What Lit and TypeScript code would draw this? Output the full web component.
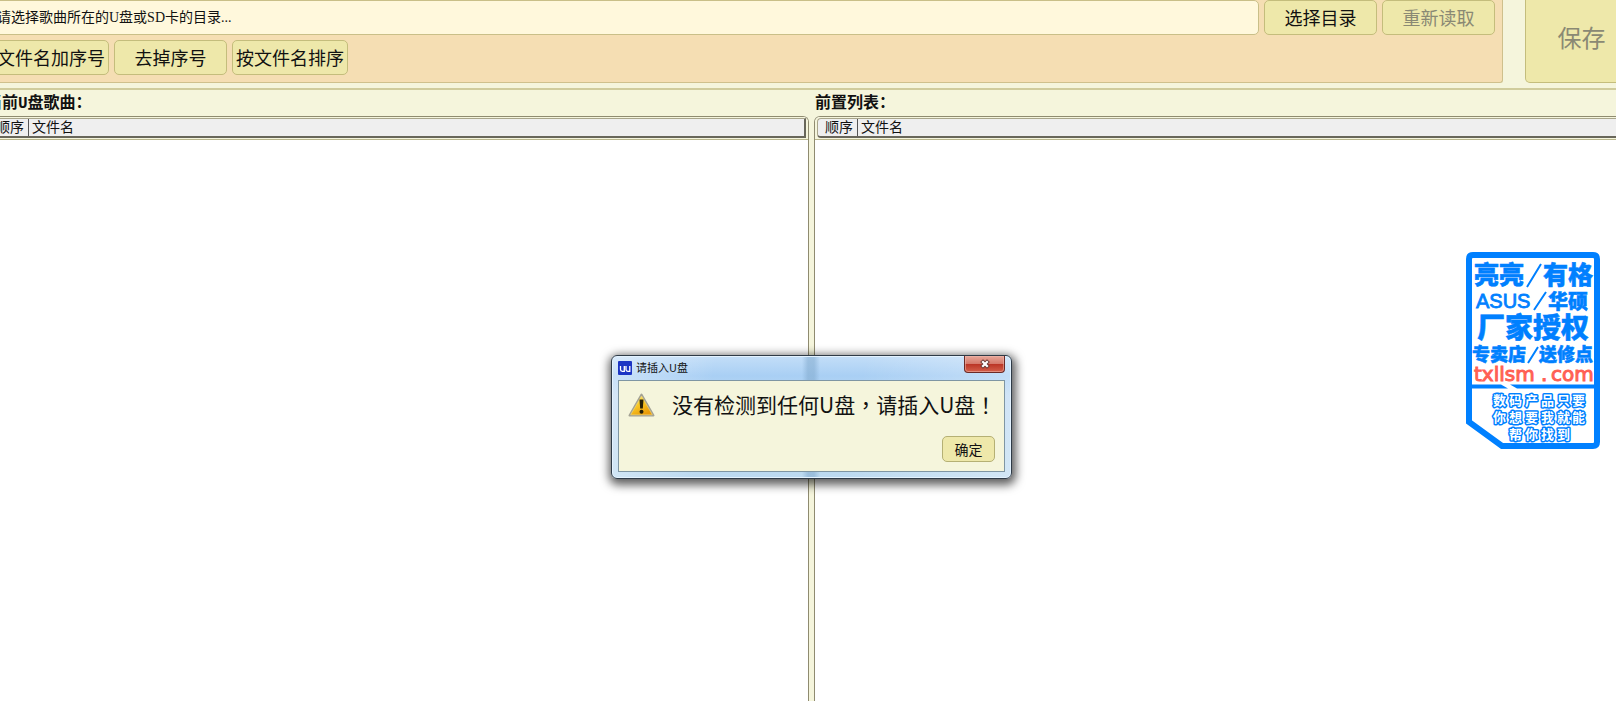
import { LitElement, html, css, svg } from "lit";
import { customElement, property, state } from "lit/decorators.js";

@customElement("song-list")
class SongList extends LitElement {
  @property() heading = "";

  static styles = css`
    :host {
      display: flex;
      flex-direction: column;
      min-width: 0;
      color: #111;
      font-family: "Liberation Mono", "Noto Sans CJK SC", monospace;
    }
    .heading {
      margin: 0;
      padding: 3px 1px 0;
      font-size: 16px;
      line-height: 23px;
      font-weight: 700;
    }
    .frame {
      flex: 1;
      box-sizing: border-box;
      border: 1px solid #8f8b70;
      border-bottom: 0;
      border-radius: 6px 6px 0 0;
      background: #fff;
      overflow: hidden;
    }
    .head-box {
      padding: 1px 2px;
      background: #f5f5dc;
      border-bottom: 1px solid #b9b68c;
    }
    table {
      width: 100%;
      box-sizing: border-box;
      table-layout: fixed;
      border-collapse: separate;
      border-spacing: 0;
      border: 1px solid #a9a68c;
      border-right: 2px solid #68665a;
      border-bottom: 2px solid #68665a;
      border-radius: 4px 0 0 4px;
      background: #efefef;
    }
    th {
      padding: 2px 0 0 3px;
      font-size: 14px;
      line-height: 15px;
      font-weight: 400;
      text-align: left;
    }
    .order {
      width: 32px;
      padding-left: 7px;
      border-right: 1px solid #555;
    }
  `;

  render() {
    return html`
      <h2 class="heading" id="heading">${this.heading}</h2>
      <div class="frame">
        <div class="head-box">
          <table aria-labelledby="heading">
            <thead>
              <tr>
                <th class="order" scope="col">顺序</th>
                <th scope="col">文件名</th>
              </tr>
            </thead>
          </table>
        </div>
      </div>
    `;
  }
}

@customElement("message-dialog")
class MessageDialog extends LitElement {
  static styles = css`
    :host {
      display: block;
      box-sizing: border-box;
      width: 401px;
      padding: 0 6px 6px;
      border: 1px solid #2f3b47;
      border-radius: 6px;
      background:
        linear-gradient(90deg, #ffffff00 190px, #7fa8cc88 196px, #7fa8cc88 202px, #ffffff00 208px),
        linear-gradient(100deg, #ffffff66 0, #ffffff00 25%, #ffffff00 60%, #ffffff55 100%),
        linear-gradient(#c3def8 0, #a9cff4 20px, #bdd9f3 40px, #bcdaf0 100%);
      box-shadow: inset 0 0 0 1px #e4f3ff, 1px 3px 10px 3px #000000a0;
      font-family: "Noto Sans CJK SC", sans-serif;
      color: #111;
    }
    .title-bar {
      display: flex;
      align-items: flex-start;
      height: 24px;
    }
    .app-icon {
      width: 14px;
      height: 14px;
      margin-top: 5px;
    }
    .title {
      flex: 1;
      margin: 3px 0 0 4px;
      font-size: 11px;
      line-height: 16px;
      font-weight: 400;
    }
    .close {
      display: flex;
      justify-content: center;
      align-items: center;
      width: 41px;
      height: 17px;
      padding: 0;
      border: 1px solid #6b2a26;
      border-top: 0;
      border-radius: 0 0 4px 4px;
      background: linear-gradient(#e7a799 0, #d5796b 48%, #bb3526 52%, #d4604b 100%);
      box-shadow: inset 0 0 0 1px #f0b9ae88;
    }
    .close svg {
      width: 12px;
      height: 10px;
    }
    .body {
      display: flex;
      flex-direction: column;
      gap: 16px;
      padding: 8px 9px 9px;
      border: 1px solid #7f96a3;
      background: #f5f5dc;
    }
    .message {
      display: flex;
      align-items: center;
      gap: 17px;
      margin: 0;
      font-size: 21px;
      line-height: 31px;
      white-space: nowrap;
    }
    .mark {
      font-family: "Noto Sans CJK TC", sans-serif;
    }
    .warn {
      width: 27px;
      height: 24px;
      flex: none;
    }
    .ok {
      align-self: flex-end;
      width: 53px;
      height: 26px;
      padding: 0;
      border: 1px solid #b5b074;
      border-radius: 5px;
      background: #eee8aa;
      color: #111;
      font: 14px/20px "Noto Sans CJK SC", sans-serif;
    }
  `;

  private dismiss() {
    this.dispatchEvent(new CustomEvent("dismiss"));
  }

  render() {
    return html`
      <div class="title-bar">
        <svg class="app-icon" viewBox="0 0 14 14" aria-hidden="true">
          <rect width="14" height="14" rx="1" fill="#1c35c4" />
          <path d="M2.500 5v3.500q0 1.800 1.800 1.800h2V5M8 5v3.500q0 1.800 1.800 1.800h2V5" fill="none" stroke="#fff" stroke-width="1.300" />
        </svg>
        <h1 class="title">请插入U盘</h1>
        <button class="close" aria-label="关闭" @click=${this.dismiss}>
          <svg viewBox="0 0 12 10" aria-hidden="true">
            <path d="M4 3l4 4M8 3l-4 4" stroke="#6a3833" stroke-width="4" stroke-linecap="square" />
            <path d="M4 3l4 4M8 3l-4 4" stroke="#fff" stroke-width="2.200" stroke-linecap="square" />
          </svg>
        </button>
      </div>
      <div class="body">
        <p class="message">
          <svg class="warn" viewBox="0 0 27 24" aria-hidden="true">
            <defs>
              <linearGradient id="amber" x1="0" y1="0" x2="0.6" y2="1">
                <stop offset="0" stop-color="#fff08a" />
                <stop offset="0.5" stop-color="#f8c928" />
                <stop offset="1" stop-color="#e99a08" />
              </linearGradient>
            </defs>
            <path d="M13.500 1.500L25.500 22.500H1.500z" fill="url(#amber)" stroke="#a3a294" stroke-width="2" stroke-linejoin="round" />
            <path d="M13.500 3L24.300 21.800H2.700z" fill="url(#amber)" stroke="#f3d878" stroke-width="0.600" />
            <path d="M11.500 6.500h4l-0.700 9h-2.600z" fill="#252008" />
            <circle cx="13.500" cy="18.700" r="2" fill="#252008" />
          </svg>
          <span>没有检测到任何U盘<span class="mark">，</span>请插入U盘<span class="mark">！</span></span>
        </p>
        <button class="ok" @click=${this.dismiss}>确定</button>
      </div>
    `;
  }
}

const stamp = svg`
  <path d="M7 3H127Q131 3 131 7V190Q131 194 127 194H36L3 170V7Q3 3 7 3Z" fill="#fff" stroke="#0080ff" stroke-width="6" />
  <path d="M3 132.500H35L42 136.500H3Z" fill="#0080ff" />
  <path d="M44 132.500H131V136.500H51Z" fill="#0080ff" />
  <g class="heavy">
    <text x="8" y="32" font-size="25">亮亮</text>
    <text x="77" y="32" font-size="25">有格</text>
    <text x="82" y="57" font-size="20">华硕</text>
    <text x="11" y="86" font-size="28">厂家授权</text>
    <text x="6" y="109" font-size="18">专卖店</text>
    <text x="73" y="109" font-size="18">送修点</text>
  </g>
  <text class="latin" x="10" y="56" font-size="20">ASUS</text>
  <path d="M61 35L75 12M68 58L80 40M62 111L72 95" stroke="#0080ff" stroke-width="2" />
  <g class="site" font-size="20">
    <text x="8" y="129">txllsm</text>
    <text x="75" y="129">.</text>
    <text x="85" y="129">com</text>
  </g>
  <g class="slogan" font-size="13">
    <text x="27 43 59 75 91 106" y="153">数码产品只要</text>
    <text x="27 43 59 75 91 106" y="170">你想要我就能</text>
    <text x="43 59 75 91" y="187">帮你找到</text>
  </g>
`;

@customElement("app-root")
class AppRoot extends LitElement {
  @state() private dialogOpen = true;

  static styles = css`
    :host {
      display: block;
      position: relative;
      height: 100vh;
      overflow: hidden;
      background: #f5f5dc;
    }
    .window {
      display: flex;
      flex-direction: column;
      height: 100%;
      margin: 0 -22px 0 -15px;
    }
    .top {
      display: flex;
      gap: 22px;
      padding-bottom: 5px;
      border-bottom: 2px solid #d0cc9c;
    }
    .panel {
      flex: 1;
      display: flex;
      flex-direction: column;
      gap: 5px;
      padding: 0 7px 7px 8px;
      border: solid #cfc08c;
      border-width: 0 1px 1px 0;
      border-radius: 0 0 3px 0;
      background: #f5deb3;
    }
    .row {
      display: flex;
      gap: 5px;
    }
    .path {
      flex: 1;
      min-width: 0;
      box-sizing: border-box;
      padding: 0 3px;
      border: 1px solid #c9bf88;
      border-radius: 5px;
      background: #fff8dc;
      color: #111;
      font: 14px/20px "Liberation Serif", "Noto Sans CJK SC", serif;
    }
    button {
      box-sizing: border-box;
      min-width: 113px;
      height: 35px;
      padding: 0 3px 2px;
      border: 1px solid #c4bd7c;
      border-radius: 5px;
      background: #eee8aa;
      color: #111;
      font: 18px/24px "Noto Sans CJK SC", sans-serif;
      white-space: nowrap;
    }
    button:disabled {
      color: #8a8974;
    }
    .save {
      height: auto;
      padding-bottom: 9px;
      border-top: 0;
      border-radius: 0 0 5px 5px;
      font-size: 24px;
    }
    .lists {
      flex: 1;
      display: grid;
      grid-template-columns: 1fr 1fr;
      gap: 5px;
    }
    .stamp {
      position: absolute;
      right: 16px;
      top: 252px;
      width: 134px;
      height: 197px;
    }
    .heavy {
      font-family: "Noto Sans CJK SC", sans-serif;
      font-weight: 900;
      fill: #0080ff;
      stroke: #0080ff;
      stroke-width: 0.5px;
    }
    .latin {
      font-family: "Liberation Sans", sans-serif;
      fill: #0080ff;
      stroke: #0080ff;
      stroke-width: 0.8px;
    }
    .site {
      font-family: "DejaVu Sans", sans-serif;
      fill: #ff6054;
      stroke: #ff6054;
      stroke-width: 1px;
    }
    .slogan {
      font-family: "Noto Sans CJK SC", sans-serif;
      font-weight: 700;
      fill: #fff;
      stroke: #0080ff;
      stroke-width: 3px;
      stroke-linejoin: round;
      paint-order: stroke;
    }
    .dialog {
      position: absolute;
      left: calc(50% - 197px);
      top: 355px;
    }
  `;

  render() {
    return html`
      <main class="window">
        <div class="top">
          <div class="panel">
            <div class="row">
              <input class="path" type="text" aria-label="目录" .value=${"请选择歌曲所在的U盘或SD卡的目录..."} />
              <button>选择目录</button>
              <button disabled>重新读取</button>
            </div>
            <div class="row">
              <button>文件名加序号</button>
              <button>去掉序号</button>
              <button>按文件名排序</button>
            </div>
          </div>
          <button class="save" disabled>保存</button>
        </div>
        <div class="lists">
          <song-list heading="当前U盘歌曲："></song-list>
          <song-list heading="前置列表："></song-list>
        </div>
      </main>
      <svg class="stamp" viewBox="0 0 134 197">${stamp}</svg>
      ${this.dialogOpen
        ? html`<message-dialog class="dialog" role="dialog" aria-label="请插入U盘" @dismiss=${() => (this.dialogOpen = false)}></message-dialog>`
        : null}
    `;
  }
}
